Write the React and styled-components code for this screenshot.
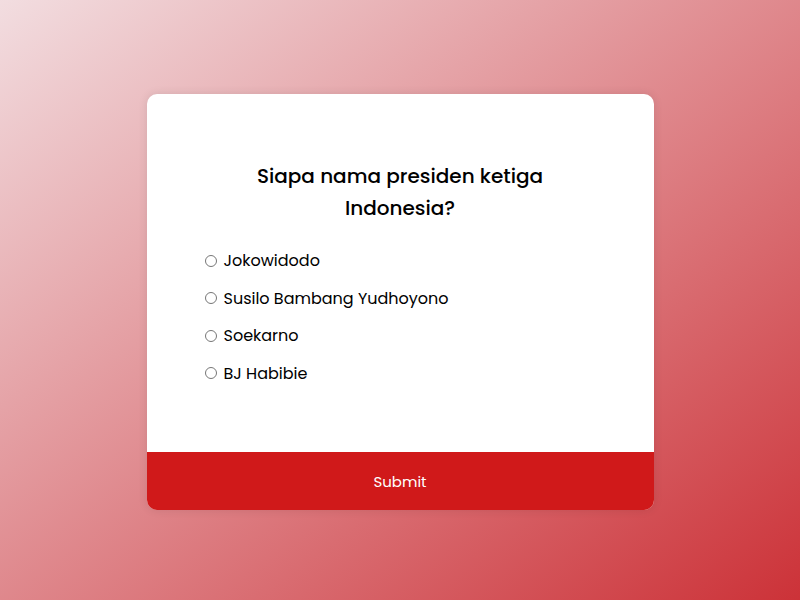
import React, { useState } from "react"
import styled, { createGlobalStyle } from "styled-components"

const GlobalStyle = createGlobalStyle`
  * {
    box-sizing: border-box;
  }
  body {
    margin: 0;
    font-family: "Poppins", "Noto Sans", "DejaVu Sans", sans-serif;
    background: linear-gradient(to bottom right, #f2dde0, #cc3238);
    min-height: 100vh;
  }
`

const Page = styled.div`
  min-height: 100vh;
  padding-top: 4px;
  display: flex;
  justify-content: center;
  align-items: center;
`

const Card = styled.div`
  width: 507px;
  background: #fff;
  border-radius: 10px;
  overflow: hidden;
  box-shadow: 0 0 10px rgba(0, 0, 0, 0.1);
`

const Body = styled.div`
  padding: 66px 58px 67px;
`

const Question = styled.h2`
  margin: 0 auto 25px;
  max-width: 320px;
  text-align: center;
  font-size: 20px;
  font-weight: 500;
  line-height: 32px;
  color: #000;
`

const Options = styled.ul`
  list-style: none;
  margin: 0;
  padding: 0;
  display: flex;
  flex-direction: column;
  gap: 13.5px;
`

const Option = styled.li`
  display: flex;
  align-items: center;
  height: 24px;
`

const Radio = styled.input`
  width: 12px;
  height: 12px;
  margin: 0 7px 0 0;
`

const Label = styled.label`
  font-size: 16px;
  color: #000;
  cursor: pointer;
`

const SubmitButton = styled.button`
  display: block;
  width: 100%;
  height: 58px;
  border: none;
  background: #d0191a;
  color: #fff;
  font-family: inherit;
  font-size: 15px;
  cursor: pointer;
`

const answers = ["Jokowidodo", "Susilo Bambang Yudhoyono", "Soekarno", "BJ Habibie"]

const App = () => {
  const [picked, setPicked] = useState(null)
  return (
    <Page>
      <GlobalStyle />
      <Card>
        <Body>
          <Question>Siapa nama presiden ketiga Indonesia?</Question>
          <Options>
            {answers.map((a, i) => (
              <Option key={a}>
                <Radio
                  type="radio"
                  name="answer"
                  id={"a" + i}
                  checked={picked === i}
                  onChange={() => setPicked(i)}
                />
                <Label htmlFor={"a" + i}>{a}</Label>
              </Option>
            ))}
          </Options>
        </Body>
        <SubmitButton>Submit</SubmitButton>
      </Card>
    </Page>
  )
}

export default App
